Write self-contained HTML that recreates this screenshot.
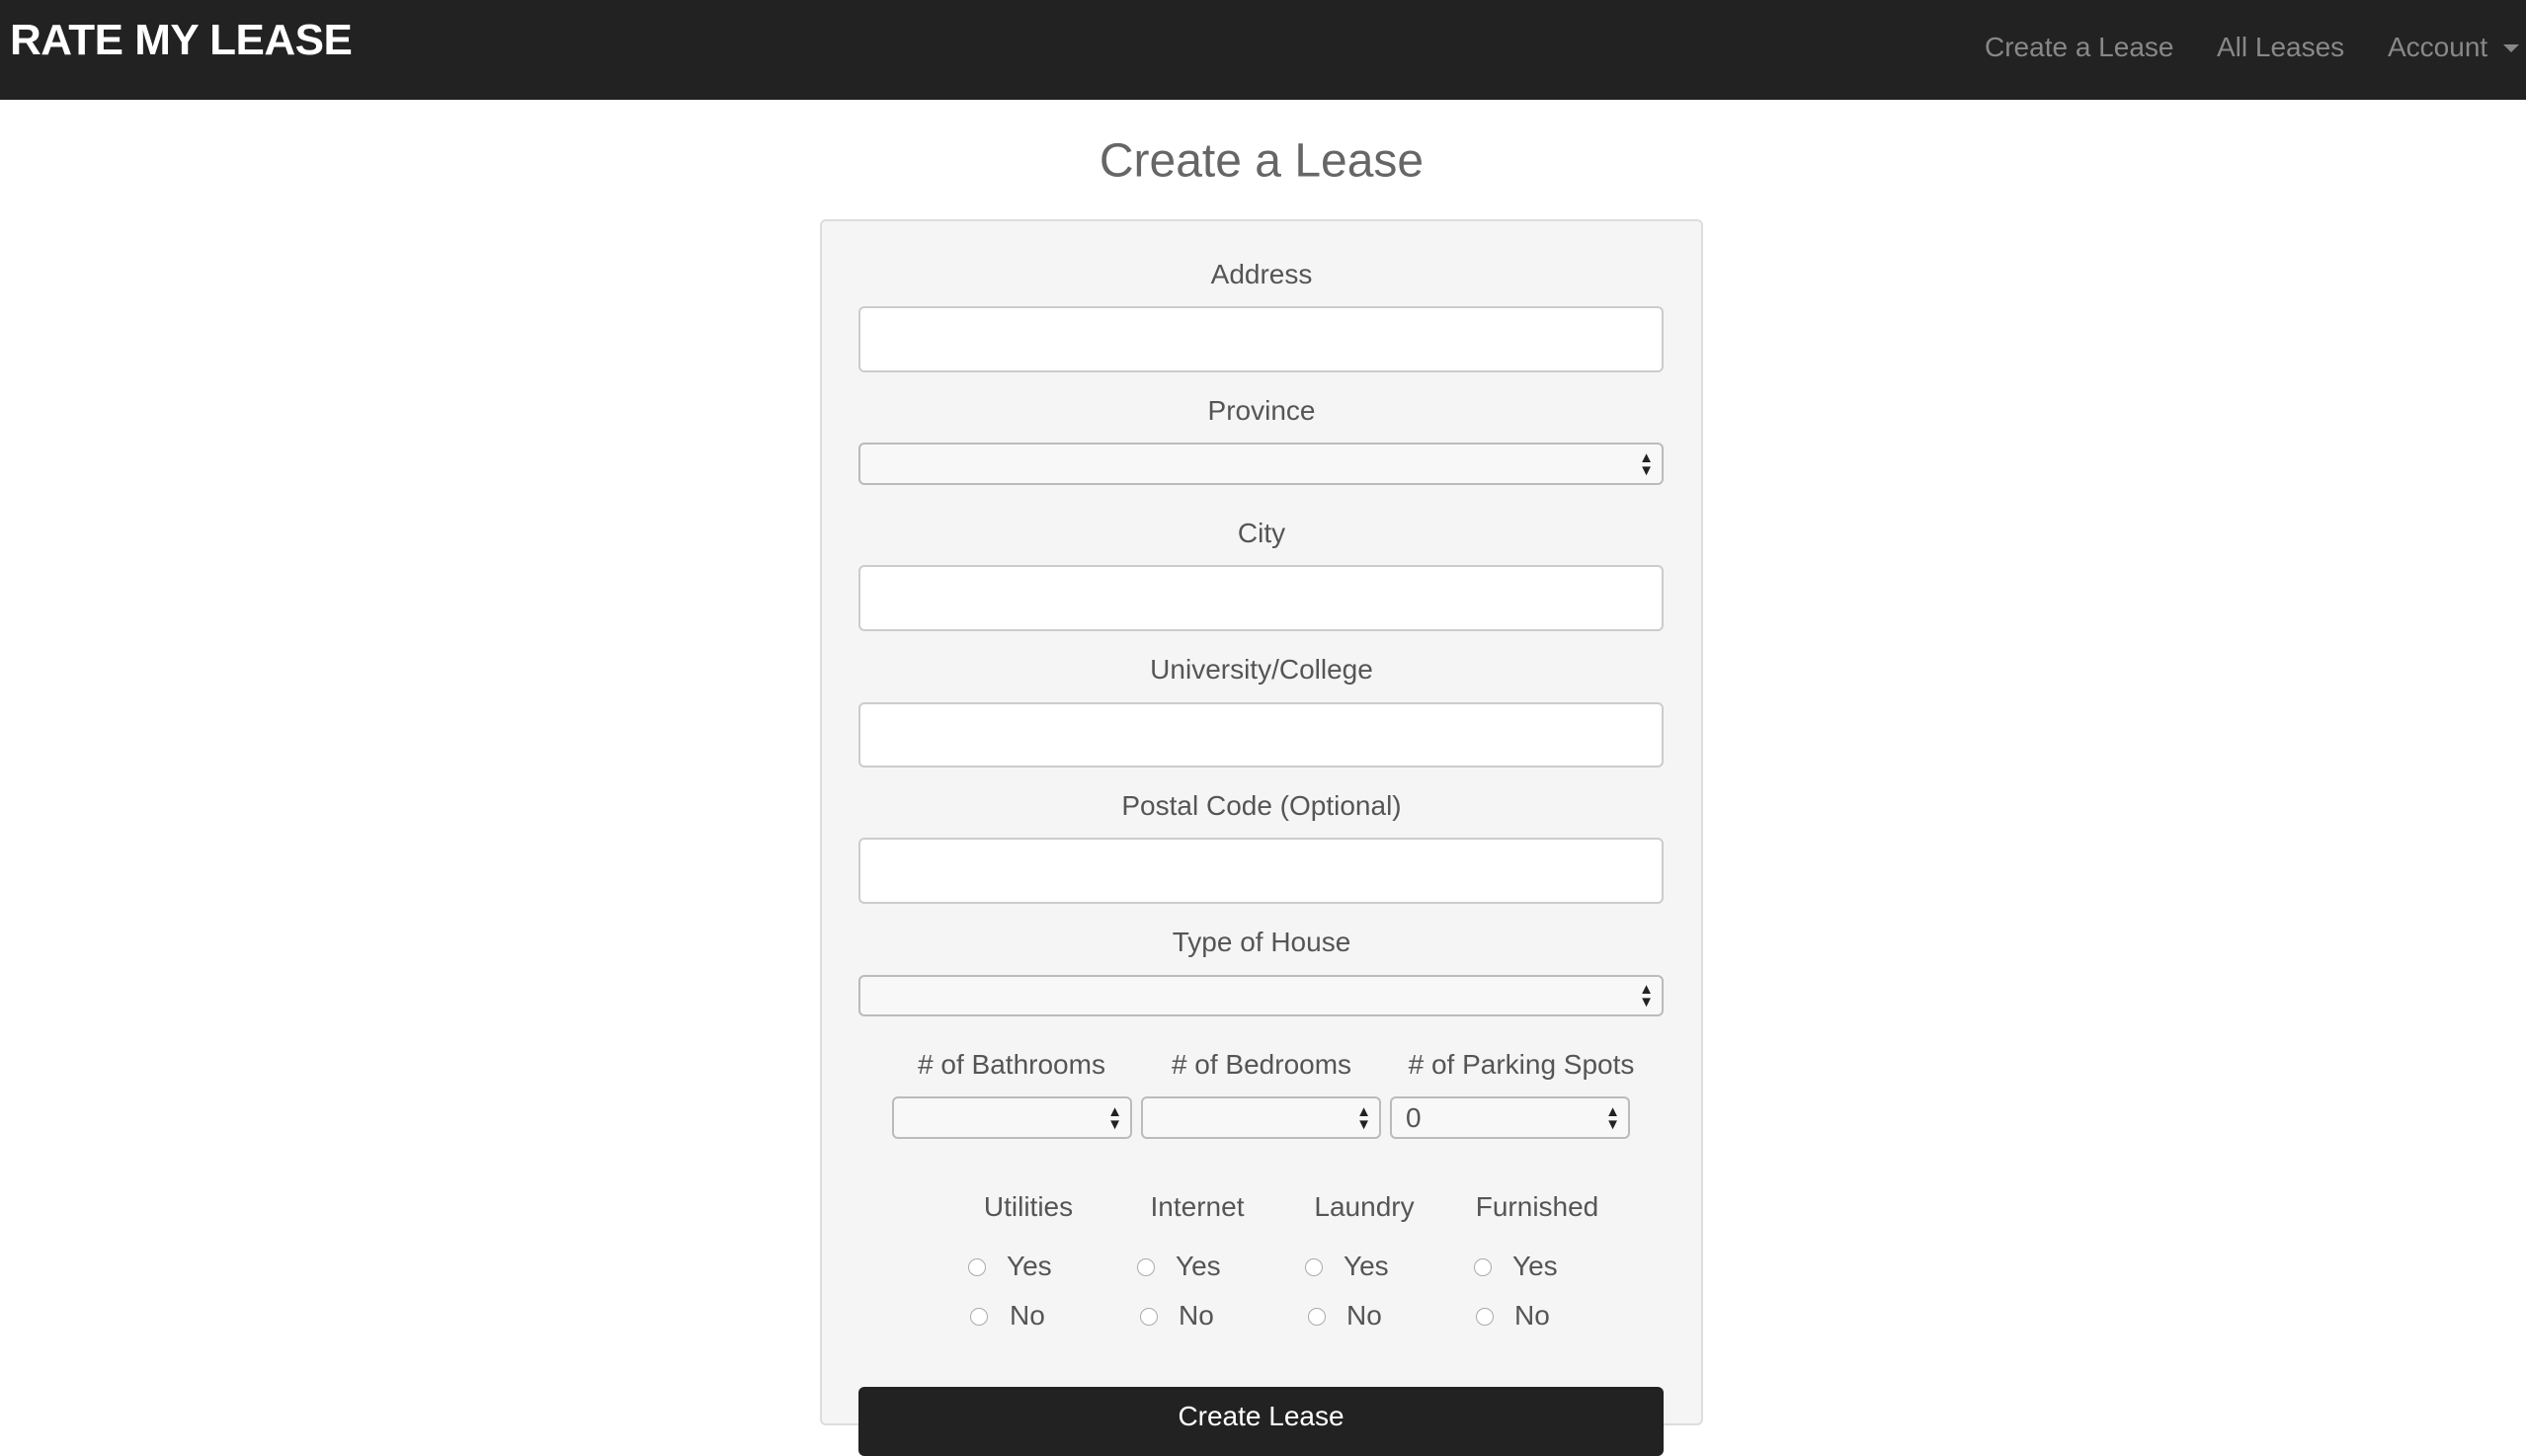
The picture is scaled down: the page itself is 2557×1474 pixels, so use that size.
<!DOCTYPE html>
<html><head><meta charset="utf-8"><style>
*{box-sizing:border-box;margin:0;padding:0}
body{width:2557px;height:1450px;overflow:hidden;background:#fff;font-family:"Liberation Sans",sans-serif;position:relative;color:#555}
.nav{position:absolute;left:0;top:0;width:2557px;height:101px;background:#222}
.logo{position:absolute;left:10px;top:16px;font-size:44px;font-weight:bold;color:#fff;letter-spacing:-0.5px}
.nl{position:absolute;top:32px;font-size:28px;color:#888;white-space:nowrap}
.a{position:absolute;white-space:nowrap;transform:translate(-50%,-50%)}
.panel{position:absolute;left:830px;top:222px;width:894px;height:1221px;background:#f5f5f5;border:2px solid #ddd;border-radius:6px}
.lbl{font-size:28px;color:#555}
.inp{position:absolute;left:869px;width:815px;background:#fff;border:2px solid #ccc;border-radius:6px}
.sel{position:absolute;background:#f8f8f8;border:2px solid #bbb;border-radius:6px}
.arr{position:absolute;right:8px;top:50%;transform:translateY(-50%);font-size:15px;line-height:13px;color:#222;text-align:center}
.rad{position:absolute;width:18px;height:18px;border:1px solid #aaa;border-radius:50%;background:#fff}
.rt{position:absolute;font-size:28px;color:#555}
.btn{position:absolute;left:869px;top:1404px;width:815px;height:70px;background:#222;border-radius:6px;color:#fff;font-size:28px;text-align:center;padding-top:14px}
</style></head><body>
<div class="nav">
<div class="logo">RATE MY LEASE</div>
<div class="nl" style="left:2009px">Create a Lease</div>
<div class="nl" style="left:2244px">All Leases</div>
<div class="nl" style="left:2417px">Account</div>
<div style="position:absolute;left:2534px;top:45px;width:0;height:0;border-left:8px solid transparent;border-right:8px solid transparent;border-top:8px solid #888"></div>
</div>
<div class="a" style="left:1277px;top:163px;font-size:48px;color:#666">Create a Lease</div>
<div class="panel"></div>
<div class="a lbl" style="left:1277px;top:278px">Address</div>
<div class="inp" style="top:310px;height:67px"></div>
<div class="a lbl" style="left:1277px;top:416px">Province</div>
<div class="sel" style="left:869px;width:815px;top:448px;height:43px"><div class="arr">▲<br>▼</div></div>
<div class="a lbl" style="left:1277px;top:540px">City</div>
<div class="inp" style="top:572px;height:67px"></div>
<div class="a lbl" style="left:1277px;top:678px">University/College</div>
<div class="inp" style="top:711px;height:66px"></div>
<div class="a lbl" style="left:1277px;top:816px">Postal Code (Optional)</div>
<div class="inp" style="top:848px;height:67px"></div>
<div class="a lbl" style="left:1277px;top:954px">Type of House</div>
<div class="sel" style="left:869px;width:815px;top:987px;height:42px"><div class="arr">▲<br>▼</div></div>
<div class="a lbl" style="left:1024px;top:1078px"># of Bathrooms</div>
<div class="a lbl" style="left:1277px;top:1078px"># of Bedrooms</div>
<div class="a lbl" style="left:1540px;top:1078px"># of Parking Spots</div>
<div class="sel" style="left:903px;width:243px;top:1110px;height:43px"><div class="arr">▲<br>▼</div></div>
<div class="sel" style="left:1155px;width:243px;top:1110px;height:43px"><div class="arr">▲<br>▼</div></div>
<div class="sel" style="left:1407px;width:243px;top:1110px;height:43px"><div style="position:absolute;left:14px;top:4px;font-size:28px;color:#555">0</div><div class="arr">▲<br>▼</div></div>
<div class="a lbl" style="left:1041px;top:1222px">Utilities</div>
<div class="a lbl" style="left:1212px;top:1222px">Internet</div>
<div class="a lbl" style="left:1381px;top:1222px">Laundry</div>
<div class="a lbl" style="left:1556px;top:1222px">Furnished</div>
<div class="rad" style="left:980px;top:1274px"></div><div class="rt" style="left:1019px;top:1266px">Yes</div>
<div class="rad" style="left:982px;top:1324px"></div><div class="rt" style="left:1022px;top:1316px">No</div>
<div class="rad" style="left:1151px;top:1274px"></div><div class="rt" style="left:1190px;top:1266px">Yes</div>
<div class="rad" style="left:1154px;top:1324px"></div><div class="rt" style="left:1193px;top:1316px">No</div>
<div class="rad" style="left:1321px;top:1274px"></div><div class="rt" style="left:1360px;top:1266px">Yes</div>
<div class="rad" style="left:1324px;top:1324px"></div><div class="rt" style="left:1363px;top:1316px">No</div>
<div class="rad" style="left:1492px;top:1274px"></div><div class="rt" style="left:1531px;top:1266px">Yes</div>
<div class="rad" style="left:1494px;top:1324px"></div><div class="rt" style="left:1533px;top:1316px">No</div>
<div class="btn">Create Lease</div>
</body></html>
